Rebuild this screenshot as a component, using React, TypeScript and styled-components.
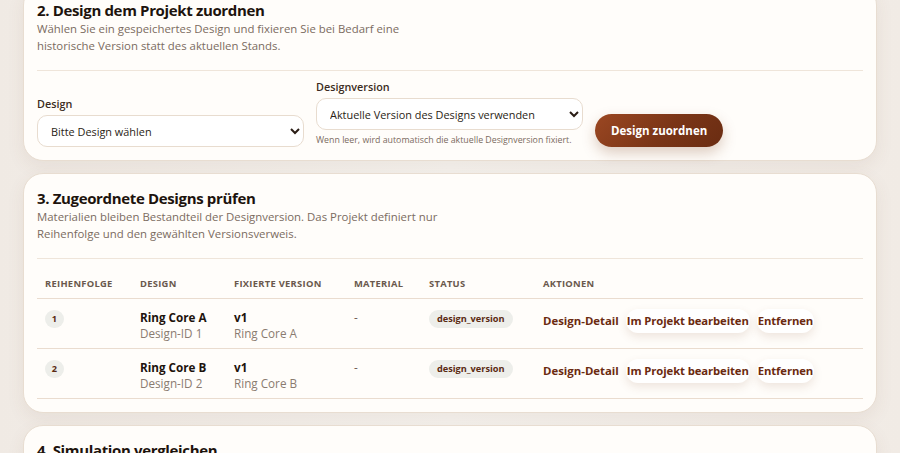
import styled, { createGlobalStyle } from 'styled-components'

const GlobalStyle = createGlobalStyle`
  * { box-sizing: border-box; }
  html, body {
    margin: 0;
    padding: 0;
    background: #f1ebe5;
    font-family: "Open Sans", "Noto Sans", sans-serif;
    color: #1f1510;
    overflow: hidden;
  }
`

const Page = styled.main`
  display: flex;
  flex-direction: column;
  gap: 12px;
  padding: 0 23px;
  margin-top: -15px;
  min-height: 480px;
  background: linear-gradient(90deg, #f0eae4 0%, #f6f3ef 50%, #f1ebe5 100%);
`

const Card = styled.section`
  background: #fffdfa;
  border: 1px solid #e8ddd1;
  border-radius: 20px;
  padding: 14px 13px 13px;
  box-shadow: 0 6px 18px rgba(110, 80, 50, 0.08);
`

const Heading = styled.h2`
  margin: 0;
  font-size: 15px;
  line-height: 21px;
  font-weight: 700;
  letter-spacing: -0.35px;
  color: #1d130d;
`

const Lead = styled.p`
  margin: 0;
  max-width: 410px;
  font-size: 11.4px;
  line-height: 16.5px;
  color: #7b6b5f;
`

const Divider = styled.hr`
  border: 0;
  border-top: 1px solid #efe5da;
  margin: 16px 0 0;
`

const FormRow = styled.div`
  display: grid;
  grid-template-columns: 267px 267px auto;
  gap: 12px;
  align-items: end;
  padding-top: 9px;
`

const Field = styled.label`
  display: flex;
  flex-direction: column;
  gap: 4px;
`

const FieldLabel = styled.span`
  font-size: 10.8px;
  line-height: 14px;
  font-weight: 600;
  color: #3b2b21;
`

const Select = styled.select`
  height: 32px;
  width: 100%;
  padding: 0 8px 0 9px;
  border: 1px solid #e8dccf;
  border-radius: 10px;
  background: #fff;
  font-family: inherit;
  font-size: 10.9px;
  color: #2a1d15;
`

const Hint = styled.span`
  font-size: 8.8px;
  line-height: 13px;
  color: #7b6b5f;
`

const PrimaryButton = styled.button`
  justify-self: start;
  height: 33px;
  padding: 0 16px;
  border: 0;
  border-radius: 999px;
  background: linear-gradient(135deg, #9b4722 0%, #7a3517 55%, #6a2c12 100%);
  color: #fff;
  font-family: inherit;
  font-size: 11.5px;
  font-weight: 700;
  box-shadow: 0 6px 14px rgba(120, 60, 25, 0.25);
`

const TableWrap = styled.div`
  padding-top: 11px;
`

const Table = styled.table`
  width: 100%;
  border-collapse: collapse;
  table-layout: fixed;
`

const Th = styled.th<{ $w: number }>`
  width: ${({ $w }) => $w}px;
  text-align: left;
  padding: 0 8px;
  height: 28px;
  font-size: 9.4px;
  font-weight: 700;
  letter-spacing: 0.03em;
  text-transform: uppercase;
  color: #6a594d;
  border-bottom: 1px solid #eadccf;
`

const Td = styled.td`
  vertical-align: top;
  padding: 10px 8px 0;
  height: 50px;
  border-bottom: 1px solid #eadccf;
  font-size: 11.7px;
  line-height: 16px;
`

const Primary = styled.div`
  font-weight: 700;
  color: #1d130d;
`

const Secondary = styled.div`
  color: #8a7b70;
`

const Muted = styled.span`
  color: #6e6058;
`

const Pill = styled.span<{ $round?: boolean }>`
  display: inline-flex;
  align-items: center;
  justify-content: center;
  height: 18px;
  min-width: ${({ $round }) => ($round ? '19px' : '0')};
  padding: 0 ${({ $round }) => ($round ? '0' : '8px')};
  border-radius: 999px;
  background: #edeeea;
  color: #5a2a12;
  font-size: 9.2px;
  font-weight: 700;
`

const Actions = styled.div`
  display: flex;
  align-items: center;
  gap: 7px;
`

const ActionLink = styled.a`
  font-size: 11.4px;
  font-weight: 700;
  color: #6b2a10;
  text-decoration: none;
  line-height: 24px;
`

const ActionButton = styled.button`
  height: 24px;
  padding: 0 1px;
  border: 0;
  border-radius: 999px;
  background: #fff;
  font-family: inherit;
  font-size: 11.3px;
  font-weight: 700;
  letter-spacing: -0.1px;
  color: #6b2a10;
  box-shadow: 0 4px 10px rgba(120, 70, 40, 0.13);
`

const rows = [
  { order: 1, name: 'Ring Core A', id: 1 },
  { order: 2, name: 'Ring Core B', id: 2 },
]

export default function App() {
  return (
    <>
      <GlobalStyle />
      <Page>
        <Card>
          <Heading>2. Design dem Projekt zuordnen</Heading>
          <Lead>
            Wählen Sie ein gespeichertes Design und fixieren Sie bei Bedarf eine
            historische Version statt des aktuellen Stands.
          </Lead>
          <Divider />
          <FormRow>
            <Field>
              <FieldLabel>Design</FieldLabel>
              <Select defaultValue="">
                <option value="">Bitte Design wählen</option>
              </Select>
            </Field>
            <Field>
              <FieldLabel>Designversion</FieldLabel>
              <Select defaultValue="">
                <option value="">Aktuelle Version des Designs verwenden</option>
              </Select>
              <Hint>
                Wenn leer, wird automatisch die aktuelle Designversion fixiert.
              </Hint>
            </Field>
            <PrimaryButton type="button">Design zuordnen</PrimaryButton>
          </FormRow>
        </Card>

        <Card>
          <Heading>3. Zugeordnete Designs prüfen</Heading>
          <Lead>
            Materialien bleiben Bestandteil der Designversion. Das Projekt
            definiert nur Reihenfolge und den gewählten Versionsverweis.
          </Lead>
          <Divider />
          <TableWrap>
            <Table>
              <thead>
                <tr>
                  <Th $w={95}>Reihenfolge</Th>
                  <Th $w={94}>Design</Th>
                  <Th $w={120}>Fixierte Version</Th>
                  <Th $w={75}>Material</Th>
                  <Th $w={114}>Status</Th>
                  <Th $w={328}>Aktionen</Th>
                </tr>
              </thead>
              <tbody>
                {rows.map((r) => (
                  <tr key={r.id}>
                    <Td>
                      <Pill $round>{r.order}</Pill>
                    </Td>
                    <Td>
                      <Primary>{r.name}</Primary>
                      <Secondary>Design-ID {r.id}</Secondary>
                    </Td>
                    <Td>
                      <Primary>v1</Primary>
                      <Secondary>{r.name}</Secondary>
                    </Td>
                    <Td>
                      <Muted>-</Muted>
                    </Td>
                    <Td>
                      <Pill>design_version</Pill>
                    </Td>
                    <Td>
                      <Actions>
                        <ActionLink href="#">Design-Detail</ActionLink>
                        <ActionButton type="button">Im Projekt bearbeiten</ActionButton>
                        <ActionButton type="button">Entfernen</ActionButton>
                      </Actions>
                    </Td>
                  </tr>
                ))}
              </tbody>
            </Table>
          </TableWrap>
        </Card>

        <Card>
          <Heading>4. Simulation vergleichen</Heading>
          <Lead>&nbsp;</Lead>
        </Card>
      </Page>
    </>
  )
}
